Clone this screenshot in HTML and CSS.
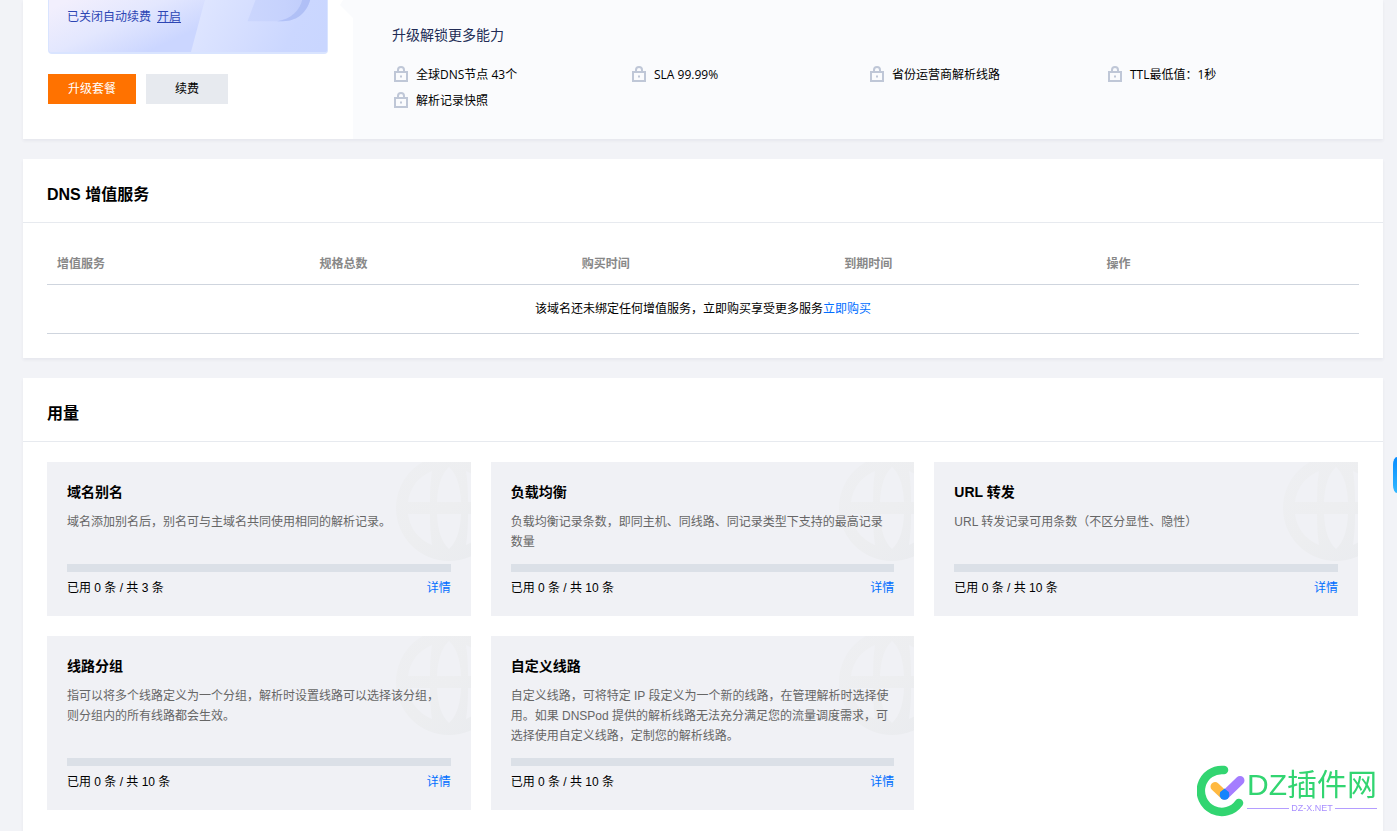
FILE: index.html
```html
<!DOCTYPE html>
<html lang="zh-CN">
<head>
<meta charset="utf-8">
<meta name="viewport" content="width=device-width, initial-scale=1">
<title>DNS 增值服务</title>
<link rel="stylesheet" href="styles.css">
</head>
<body>
<svg class="defs" aria-hidden="true">
  <defs>
    <linearGradient id="globe-fill" x1="0" y1="0" x2="1" y2="1">
      <stop offset="0" stop-color="#eeeff2"/><stop offset="0.5" stop-color="#edeef0"/><stop offset="1" stop-color="#e9ebef"/>
    </linearGradient>
    <symbol id="lock" viewBox="0 0 14 16">
      <path d="M1 6h12v9H1z M4 6V4a3 3 0 0 1 6 0v2" fill="none" stroke="#bfc7d7" stroke-width="2"/>
      <path d="M6 9.500h2v2H6z" fill="#bfc7d7"/>
    </symbol>
    <symbol id="globe" viewBox="0 0 75 100">
      <path fill="url(#globe-fill)" fill-rule="evenodd" d="M0 46a53 53 0 1 0 106 0a53 53 0 1 0-106 0z
        M36 9Q15 18 12 40H34Q34 22 36 9z M36 83Q15 74 12 52H34Q34 70 36 83z
        M53 5Q42 15 41 40H65Q64 15 53 5z M53 87Q42 77 41 52H65Q64 77 53 87z
        M70 9Q91 18 94 40H72Q72 22 70 9z M70 83Q91 74 94 52H72Q72 70 70 83z"/>
    </symbol>
  </defs>
</svg>
<main class="page">
  <section class="card plan">
    <div class="plan-side">
      <div class="banner">
        <svg class="banner-art" viewBox="0 0 280 54" preserveAspectRatio="none" aria-hidden="true">
          <defs>
            <linearGradient id="art-band" gradientUnits="userSpaceOnUse" x1="150" y1="0" x2="270" y2="60"><stop offset="0" stop-color="#dfe6ff"/><stop offset="0.400" stop-color="#d5deff"/><stop offset="0.750" stop-color="#cbd7ff"/><stop offset="1" stop-color="#c9d6ff"/></linearGradient>
            <linearGradient id="art-d"><stop offset="0" stop-color="#cbd6fd"/><stop offset="0.600" stop-color="#c6d2fd"/><stop offset="1" stop-color="#c0cdfb"/></linearGradient>
          </defs>
          <path d="M157 0L143 54H280V0z" fill="url(#art-band)"/>
          <path d="M208 0L200 22H235C252 22 260 11 263 0z" fill="url(#art-d)"/>
          <path d="M230 22C244 20 253 10 255 0H263C260 11 252 22 235 22z" fill="#a8b9f3" opacity=".7"/>
        </svg>
        <p class="renew">已关闭自动续费<a class="renew-link" href="#">开启</a></p>
      </div>
      <div class="actions">
        <button class="btn btn-primary" type="button">升级套餐</button>
        <button class="btn btn-plain" type="button">续费</button>
      </div>
    </div>
    <div class="plan-more">
      <svg class="notch" viewBox="0 0 14 24" aria-hidden="true"><path d="M14 0H4L1 5L14 18z" fill="#fafbfd"/></svg>
      <h2 class="more-title">升级解锁更多能力</h2>
      <ul class="features">
        <li class="feature"><svg class="lock"><use href="#lock"/></svg>全球DNS节点 43个</li>
        <li class="feature"><svg class="lock"><use href="#lock"/></svg>SLA 99.99%</li>
        <li class="feature"><svg class="lock"><use href="#lock"/></svg>省份运营商解析线路</li>
        <li class="feature"><svg class="lock"><use href="#lock"/></svg>TTL最低值：1秒</li>
        <li class="feature"><svg class="lock"><use href="#lock"/></svg>解析记录快照</li>
      </ul>
    </div>
  </section>

  <section class="card">
    <h2 class="card-title">DNS 增值服务</h2>
    <div class="card-body table-body">
      <table class="services">
        <thead><tr><th>增值服务</th><th>规格总数</th><th>购买时间</th><th>到期时间</th><th>操作</th></tr></thead>
        <tbody><tr><td colspan="5">该域名还未绑定任何增值服务，立即购买享受更多服务<a href="#">立即购买</a></td></tr></tbody>
      </table>
    </div>
  </section>

  <section class="card card-last">
    <h2 class="card-title">用量</h2>
    <div class="card-body usage">
      <article class="tile">
        <svg class="globe"><use href="#globe"/></svg>
        <h3 class="tile-title">域名别名</h3>
        <p class="tile-text">域名添加别名后，别名可与主域名共同使用相同的解析记录。</p>
        <div class="bar"></div>
        <div class="tile-foot"><span>已用 0 条 / 共 3 条</span><a href="#">详情</a></div>
      </article>
      <article class="tile">
        <svg class="globe"><use href="#globe"/></svg>
        <h3 class="tile-title">负载均衡</h3>
        <p class="tile-text">负载均衡记录条数，即同主机、同线路、同记录类型下支持的最高记录数量</p>
        <div class="bar"></div>
        <div class="tile-foot"><span>已用 0 条 / 共 10 条</span><a href="#">详情</a></div>
      </article>
      <article class="tile">
        <svg class="globe"><use href="#globe"/></svg>
        <h3 class="tile-title">URL 转发</h3>
        <p class="tile-text">URL 转发记录可用条数（不区分显性、隐性）</p>
        <div class="bar"></div>
        <div class="tile-foot"><span>已用 0 条 / 共 10 条</span><a href="#">详情</a></div>
      </article>
      <article class="tile">
        <svg class="globe"><use href="#globe"/></svg>
        <h3 class="tile-title">线路分组</h3>
        <p class="tile-text">指可以将多个线路定义为一个分组，解析时设置线路可以选择该分组，则分组内的所有线路都会生效。</p>
        <div class="bar"></div>
        <div class="tile-foot"><span>已用 0 条 / 共 10 条</span><a href="#">详情</a></div>
      </article>
      <article class="tile">
        <svg class="globe"><use href="#globe"/></svg>
        <h3 class="tile-title">自定义线路</h3>
        <p class="tile-text">自定义线路，可将特定 IP 段定义为一个新的线路，在管理解析时选择使用。如果 DNSPod 提供的解析线路无法充分满足您的流量调度需求，可选择使用自定义线路，定制您的解析线路。</p>
        <div class="bar"></div>
        <div class="tile-foot"><span>已用 0 条 / 共 10 条</span><a href="#">详情</a></div>
      </article>
    </div>
  </section>
</main>
<button class="side-tab" type="button" aria-label="展开"></button>
<div class="mark">
  <svg class="mark-logo" viewBox="0 0 48 52" aria-hidden="true">
    <path d="M27 5A21 21 0 1 0 42 38" fill="none" stroke="#32d571" stroke-width="8.500" stroke-linecap="round"/>
    <path d="M18 21.500L27 30" stroke="#ffb940" stroke-width="9" stroke-linecap="round"/>
    <path d="M43 15.500L28 30" stroke="#a47dff" stroke-width="9" stroke-linecap="round"/>
    <path d="M23 27.500L27.500 23.500L32 27.500V31H23z" fill="#1684fc"/>
    <circle cx="27.500" cy="30" r="4.800" fill="#1684fc"/>
  </svg>
  <div class="mark-words">
    <span class="mark-name">DZ插件网</span>
    <span class="mark-site">DZ-X.NET</span>
  </div>
</div>
</body>
</html>
```
FILE: styles.css
```css
* { box-sizing: border-box; }
body {
  margin: 0;
  background: #f2f3f7;
  color: #000;
  font: 12px/20px "Liberation Sans", "Noto Sans CJK SC", sans-serif;
}
h2, h3, p, ul { margin: 0; padding: 0; }
a { color: #006eff; text-decoration: none; }
.defs { position: absolute; width: 0; height: 0; }

.page {
  display: flex;
  flex-direction: column;
  gap: 20px;
  min-height: 100vh;
  padding: 0 14px 0 23px;
}
.card { background: #fff; box-shadow: 0 2px 3px rgba(54, 58, 80, .06); }
.card-last { flex: 1; }
.card-title {
  padding: 24px 24px 15px;
  border-bottom: 1px solid #e7eaef;
  font-size: 16px;
  line-height: 24px;
  font-weight: 700;
}
.card-body { padding: 20px 25px 21px 24px; }

.plan { display: flex; font-family: "Open Sans", "Noto Sans CJK SC", sans-serif; }
.plan-side { width: 330px; padding: 0 25px 35px; }
.banner {
  position: relative;
  height: 54px;
  overflow: hidden;
  border: 1px solid #d9e4ff;
  border-top: 0;
  border-bottom-width: 2px;
  border-radius: 0 0 4px 4px;
  background: linear-gradient(155deg, #f2effd 5%, #e3e7fe 30%, #cbd6ff 54%);
}
.banner-art { position: absolute; inset: 0; width: 100%; height: 100%; }
.renew { position: relative; padding: 7px 18px; color: #2c45b4; }
.renew-link { margin-left: 6px; color: inherit; text-decoration: underline; }
.actions { display: flex; gap: 10px; margin-top: 20px; }
.btn {
  height: 30px;
  padding: 0 20px;
  border: 0;
  font: inherit;
  cursor: pointer;
}
.btn-primary { background: #ff7200; color: #fff; }
.btn-plain { padding: 0 29px; background: #e7eaef; color: #000; }
.plan-more {
  position: relative;
  flex: 1;
  padding: 25px 39px 26px;
  background: #fafbfd;
}
.notch { position: absolute; top: 0; left: -14px; width: 14px; height: 24px; }
.more-title { color: #222c56; font-size: 14px; line-height: 20px; font-weight: 400; }
.features {
  display: grid;
  grid-template-columns: repeat(4, 1fr);
  row-gap: 6px;
  margin-top: 20px;
  list-style: none;
}
.feature { display: flex; align-items: center; gap: 8px; padding-left: 2px; }
.lock { width: 14px; height: 16px; margin-bottom: 2px; }

.table-body { padding: 30px 24px 24px; }
.services { width: 100%; border-collapse: collapse; table-layout: fixed; }
.services th {
  padding: 1px 10px 10px;
  border-bottom: 1px solid #cfd5de;
  color: #888;
  font-weight: 700;
  text-align: left;
}
.services td { padding: 14px 10px; border-bottom: 1px solid #cfd5de; text-align: center; }

.usage { display: grid; grid-template-columns: repeat(3, 1fr); gap: 20px; }
.tile {
  position: relative;
  display: flex;
  flex-direction: column;
  padding: 20px 20px 18px;
  background: #f0f1f5;
}
.globe { position: absolute; top: 0; right: 0; width: 75px; height: 100px; }
.tile-title { position: relative; font-size: 14px; line-height: 20px; font-weight: 700; }
.tile-text { position: relative; min-height: 40px; margin: 10px 0 12px; color: #666; }
.bar { position: relative; height: 8px; margin-top: auto; background: #dbe0e7; }
.tile-foot { display: flex; justify-content: space-between; margin-top: 6px; }

.side-tab {
  position: fixed;
  top: 457px;
  right: 0;
  width: 4px;
  height: 36px;
  padding: 0;
  border: 0;
  border-radius: 4px 0 0 4px / 8px 0 0 8px;
  background: linear-gradient(#078cff, #32b8ff);
}
.mark { position: fixed; right: 20px; bottom: 14px; display: flex; gap: 2px; }
.mark-logo { width: 48px; height: 52px; }
.mark-words { display: flex; flex-direction: column; }
.mark-name {
  color: #32d571;
  font: 400 30px/40px "Liberation Sans", "Noto Sans CJK SC", sans-serif;
  white-space: nowrap;
}
.mark-site {
  display: flex;
  align-items: center;
  gap: 2px;
  color: #a990ff;
  font-size: 9px;
  line-height: 6px;
}
.mark-site::before, .mark-site::after { content: ""; flex: 1; height: 1px; background: #b49dff; }
```
